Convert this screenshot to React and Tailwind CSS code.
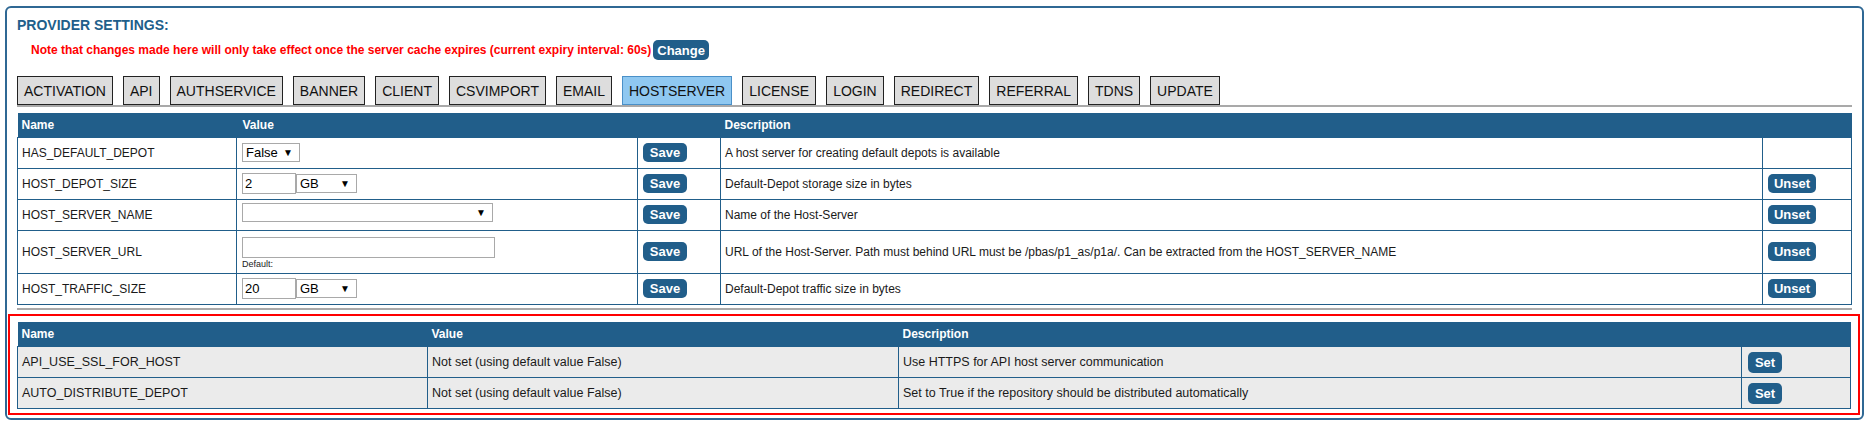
import React from 'react';

const tabs = ['ACTIVATION', 'API', 'AUTHSERVICE', 'BANNER', 'CLIENT', 'CSVIMPORT', 'EMAIL', 'HOSTSERVER', 'LICENSE', 'LOGIN', 'REDIRECT', 'REFERRAL', 'TDNS', 'UPDATE'];

const BlueButton = ({ children, className = '' }) => (
    <button className={`h-[19px] rounded-[5px] bg-[#215e8a] text-[13px] font-bold leading-none text-white ${className}`}>
        {children}
    </button>
);

const Select = ({ value, className = '' }) => (
    <span className={`relative inline-flex h-[19px] items-center border border-[#a9a9a9] bg-white pl-[3px] text-[13px] leading-none text-black ${className}`}>
        {value}
        <span className="absolute right-[6px] top-[4px] text-[10px] leading-none">▼</span>
    </span>
);

const Input = ({ value, className = '' }) => (
    <span className={`inline-flex h-[21px] items-center border border-[#a9a9a9] bg-white pl-[2px] text-[13px] leading-none text-black ${className}`}>
        {value}
    </span>
);

const SizeField = ({ value }) => (
    <div className="flex items-center">
        <Input value={value} className="w-[54px]" />
        <Select value="GB" className="w-[61px]" />
    </div>
);

const settings = [
    { name: 'HAS_DEFAULT_DEPOT', value: <Select value="False" className="w-[58px]" />, desc: 'A host server for creating default depots is available', unset: false },
    { name: 'HOST_DEPOT_SIZE', value: <SizeField value="2" />, desc: 'Default-Depot storage size in bytes', unset: true },
    { name: 'HOST_SERVER_NAME', value: <Select value="" className="w-[251px]" />, desc: 'Name of the Host-Server', unset: true },
    {
        name: 'HOST_SERVER_URL',
        value: (
            <div className="flex flex-col pt-[3px]">
                <Input value="" className="w-[253px]" />
                <span className="mt-[2px] text-[9px] leading-none text-[#222]">Default:</span>
            </div>
        ),
        desc: 'URL of the Host-Server. Path must behind URL must be /pbas/p1_as/p1a/. Can be extracted from the HOST_SERVER_NAME',
        unset: true,
        tall: true,
    },
    { name: 'HOST_TRAFFIC_SIZE', value: <SizeField value="20" />, desc: 'Default-Depot traffic size in bytes', unset: true },
];

const unsetSettings = [
    { name: 'API_USE_SSL_FOR_HOST', desc: 'Use HTTPS for API host server communication' },
    { name: 'AUTO_DISTRIBUTE_DEPOT', desc: 'Set to True if the repository should be distributed automatically' },
];

export default function App() {
    return (
        <div className="min-h-screen bg-white pt-[6px] font-['Liberation_Sans',Arial,sans-serif] text-[12px] text-[#1a1a1a]">
            <div className="ml-[5px] w-[1859px] rounded-[6px] border-2 border-[#2f6894] px-[10px] pb-[3px] pt-[9px]">
                <h2 className="text-[14px] font-bold leading-[16px] text-[#215e8a]">PROVIDER SETTINGS:</h2>

                <div className="mt-[7px] flex h-[20px] items-center pl-[14px]">
                    <span className="text-[12px] font-bold text-[#ff0000]">
                        Note that changes made here will only take effect once the server cache expires (current expiry interval: 60s)
                    </span>
                    <BlueButton className="ml-[2px] h-[20px] px-[4px] text-[12px]">Change</BlueButton>
                </div>

                <div className="mt-[16px] flex gap-[10px]">
                    {tabs.map((tab) => (
                        <button
                            key={tab}
                            className={`h-[29px] border px-[6px] text-[14px] leading-none text-[#111] ${tab === 'HOSTSERVER' ? 'border-[#4a90c8] bg-[#8fc8f1]' : 'border-[#222] bg-[#dddddd]'}`}
                        >
                            {tab}
                        </button>
                    ))}
                </div>
                <div className="h-[2px] bg-[#a9a9a9]" />

                <table className="mt-[6px] w-full table-fixed border-collapse">
                    <colgroup>
                        <col className="w-[219px]" />
                        <col className="w-[401px]" />
                        <col className="w-[83px]" />
                        <col />
                        <col className="w-[89px]" />
                    </colgroup>
                    <thead>
                        <tr className="h-[24px] bg-[#215e8a] text-left font-bold text-white">
                            <th className="px-[4px]">Name</th>
                            <th className="px-[6px]">Value</th>
                            <th />
                            <th className="px-[4px]">Description</th>
                            <th />
                        </tr>
                    </thead>
                    <tbody>
                        {settings.map((s) => (
                            <tr key={s.name} className={s.tall ? 'h-[43px]' : 'h-[31px]'}>
                                <td className="border border-[#215e8a] px-[4px]">{s.name}</td>
                                <td className="border border-[#215e8a] px-[5px]">{s.value}</td>
                                <td className="border border-[#215e8a] px-[5px]">
                                    <BlueButton className="w-[44px]">Save</BlueButton>
                                </td>
                                <td className="border border-[#215e8a] px-[4px]">{s.desc}</td>
                                <td className="border border-[#215e8a] px-[5px]">
                                    {s.unset && <BlueButton className="w-[48px]">Unset</BlueButton>}
                                </td>
                            </tr>
                        ))}
                    </tbody>
                </table>
                <div className="mt-[3px] h-[2px] bg-[#a9a9a9]" />

                <div className="ml-[-9px] mr-[-8px] mt-[4px] border-2 border-[#ff0000] px-[7px] pb-[4px] pt-[6px]">
                    <table className="w-full table-fixed border-collapse text-[12.5px]">
                        <colgroup>
                            <col className="w-[410px]" />
                            <col className="w-[471px]" />
                            <col />
                            <col className="w-[109px]" />
                        </colgroup>
                        <thead>
                            <tr className="h-[25px] bg-[#215e8a] text-left text-[12px] font-bold text-white">
                                <th className="px-[4px]">Name</th>
                                <th className="px-[4px]">Value</th>
                                <th className="px-[4px]">Description</th>
                                <th />
                            </tr>
                        </thead>
                        <tbody>
                            {unsetSettings.map((s) => (
                                <tr key={s.name} className="h-[31px] bg-[#ebebeb]">
                                    <td className="border border-[#215e8a] px-[4px]">{s.name}</td>
                                    <td className="border border-[#215e8a] px-[4px]">Not set (using default value False)</td>
                                    <td className="border border-[#215e8a] px-[4px]">{s.desc}</td>
                                    <td className="border border-[#215e8a] px-[6px]">
                                        <BlueButton className="h-[21px] w-[34px]">Set</BlueButton>
                                    </td>
                                </tr>
                            ))}
                        </tbody>
                    </table>
                </div>
            </div>
        </div>
    );
}
